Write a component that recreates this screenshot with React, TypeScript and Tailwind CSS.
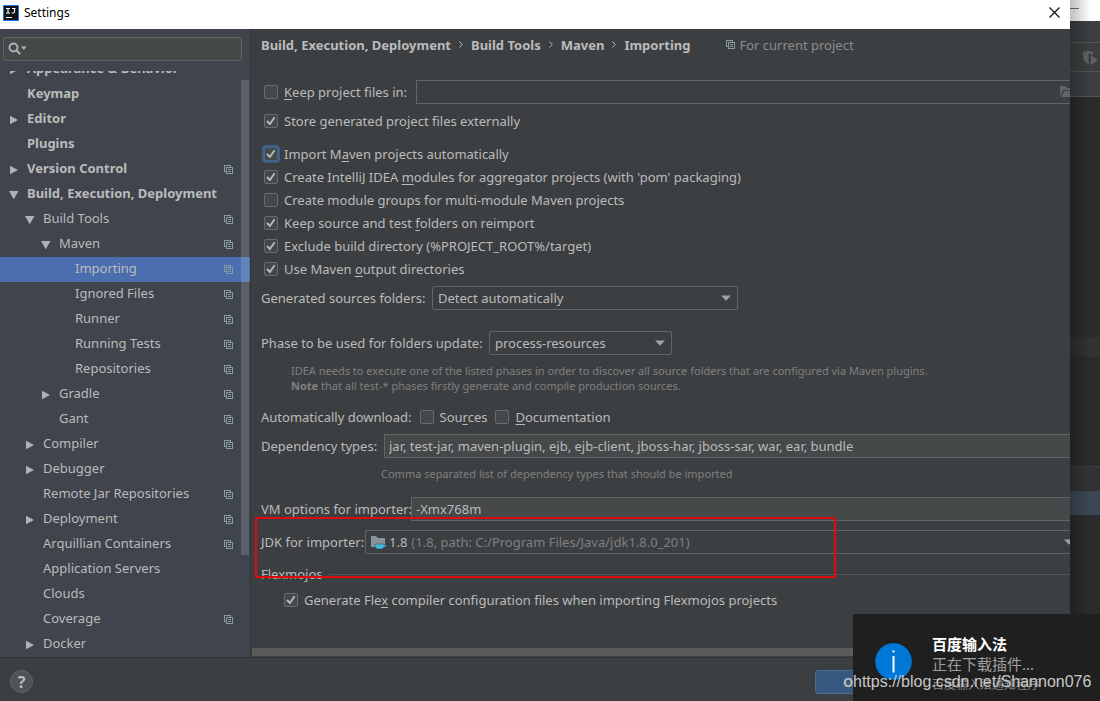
import type { ReactNode } from "react";

type TreeItem = {
  label: string;
  level: 0 | 1 | 2 | 3;
  arrow?: "open" | "closed";
  copy?: boolean;
  selected?: boolean;
};

const tree: TreeItem[] = [
  { label: "Appearance & Behavior", level: 0, arrow: "closed" },
  { label: "Keymap", level: 0 },
  { label: "Editor", level: 0, arrow: "closed" },
  { label: "Plugins", level: 0 },
  { label: "Version Control", level: 0, arrow: "closed", copy: true },
  { label: "Build, Execution, Deployment", level: 0, arrow: "open" },
  { label: "Build Tools", level: 1, arrow: "open", copy: true },
  { label: "Maven", level: 2, arrow: "open", copy: true },
  { label: "Importing", level: 3, copy: true, selected: true },
  { label: "Ignored Files", level: 3, copy: true },
  { label: "Runner", level: 3, copy: true },
  { label: "Running Tests", level: 3, copy: true },
  { label: "Repositories", level: 3, copy: true },
  { label: "Gradle", level: 2, arrow: "closed", copy: true },
  { label: "Gant", level: 2, copy: true },
  { label: "Compiler", level: 1, arrow: "closed", copy: true },
  { label: "Debugger", level: 1, arrow: "closed" },
  { label: "Remote Jar Repositories", level: 1, copy: true },
  { label: "Deployment", level: 1, arrow: "closed", copy: true },
  { label: "Arquillian Containers", level: 1, copy: true },
  { label: "Application Servers", level: 1 },
  { label: "Clouds", level: 1 },
  { label: "Coverage", level: 1, copy: true },
  { label: "Docker", level: 1, arrow: "closed" },
];

const indent = ["pl-2", "pl-6", "pl-10", "pl-14"];

function CopyIcon() {
  return (
    <svg width="9" height="9" viewBox="0 0 9 9" className="shrink-0" shapeRendering="crispEdges" fill="none" stroke="#8a9aa3" aria-hidden="true">
      <path d="M2 6.5H.5V.5H6.5V2M2.5 2.5H8.5V8.5H2.5ZM4 4.5H7M4 6.5H7" />
    </svg>
  );
}

function TreeArrow({ state }: { state?: "open" | "closed" }) {
  return (
    <svg width="10" height="10" viewBox="0 0 10 10" className="mr-2 ml-px shrink-0" fill="#afb1b3" aria-hidden="true">
      {state === "closed" && <path d="M1 0.7 9 5 1 9.3Z" />}
      {state === "open" && <path d="M0 1H9.5L4.75 9.3Z" />}
    </svg>
  );
}

function DownArrow({ className }: { className: string }) {
  return (
    <svg width="10" height="6" viewBox="0 0 10 6" className={className} fill="#9fa3a5" aria-hidden="true">
      <path d="M0 .5H10L5 5.7Z" />
    </svg>
  );
}

function Check({
  children,
  checked = false,
  focused = false,
}: {
  children: ReactNode;
  checked?: boolean;
  focused?: boolean;
}) {
  return (
    <label className="flex h-[23px] shrink-0 items-center gap-1.5 whitespace-nowrap">
      <span className="grid size-3.5 shrink-0 place-items-center">
        <input
          type="checkbox"
          defaultChecked={checked}
          className={`peer col-start-1 row-start-1 size-3.5 appearance-none rounded-[2px] border bg-[#43494a] ${
            focused ? "border-[#43698e] ring-2 ring-[#3d6185]" : "border-[#6b6b6b]"
          }`}
        />
        <svg
          width="10"
          height="10"
          viewBox="0 0 10 10"
          className="pointer-events-none invisible col-start-1 row-start-1 peer-checked:visible"
          fill="none"
          stroke="#b5b8ba"
          strokeWidth="2"
          aria-hidden="true"
        >
          <path d="M1 5 3.9 8 8.6 1.2" />
        </svg>
      </span>
      <span>{children}</span>
    </label>
  );
}

function M({ children }: { children: ReactNode }) {
  return <span className="underline underline-offset-2">{children}</span>;
}

function Crumb({ children, last = false }: { children: ReactNode; last?: boolean }) {
  return (
    <li className="flex items-center">
      <span className="font-bold">{children}</span>
      {!last && (
        <svg width="4" height="7" viewBox="0 0 4 7" className="mx-2" fill="none" stroke="#bbbbbb" aria-hidden="true">
          <path d="M.5.5 3.2 3.5.5 6.5" />
        </svg>
      )}
    </li>
  );
}

function Sidebar() {
  return (
    <aside className="relative flex w-[251px] shrink-0 flex-col border-r border-[#333638] bg-[#40444d]">
      <div className="mt-2 mr-2 ml-[3px] flex h-6 shrink-0 items-center rounded-[3px] border border-[#646464] bg-[#45494a] pl-1">
        <svg width="20" height="14" viewBox="0 0 20 14" className="shrink-0" fill="none" stroke="#afb1b3" strokeWidth="2" aria-hidden="true">
          <circle cx="5.5" cy="5.5" r="4" />
          <path d="M8.5 8.5 12.3 12.3" />
          <path d="M13 4.5H18.6L15.8 8Z" fill="#afb1b3" stroke="none" />
        </svg>
        <input type="search" aria-label="Search settings" className="w-full min-w-0 bg-transparent outline-none" />
      </div>
      <nav aria-label="Settings categories" className="mt-2.5 min-h-0 flex-1 overflow-hidden">
        <ul className="-mt-3.5">
          {tree.map((item) => (
            <li key={item.label}>
              <button
                type="button"
                className={`flex h-[25px] w-full items-center pr-[17px] text-left whitespace-nowrap ${indent[item.level]} ${
                  item.level === 0 ? "font-bold" : ""
                } ${item.selected ? "bg-[#4b6eaf]" : ""}`}
              >
                <TreeArrow state={item.arrow} />
                <span className="flex-1 pb-1">{item.label}</span>
                {item.copy && <CopyIcon />}
              </button>
            </li>
          ))}
        </ul>
      </nav>
      <div className="absolute top-[51px] right-px h-[475px] w-2 bg-white/15" />
    </aside>
  );
}

function Content() {
  return (
    <main className="flex min-w-0 flex-1 flex-col overflow-hidden pl-2.5 whitespace-nowrap">
      <div className="flex h-[31px] items-center gap-9">
        <ol className="flex">
          <Crumb>Build, Execution, Deployment</Crumb>
          <Crumb>Build Tools</Crumb>
          <Crumb>Maven</Crumb>
          <Crumb last>Importing</Crumb>
        </ol>
        <span className="flex items-center gap-1 text-[#8c8c8c]">
          <CopyIcon />
          For current project
        </span>
      </div>

      <div className="mt-5 flex h-6 items-center pl-[3px]">
        <Check>
          <M>K</M>eep project files in:
        </Check>
        <div className="ml-[9px] flex h-6 min-w-0 flex-1 items-center overflow-hidden border border-r-0 border-[#646464]">
          <input type="text" aria-label="Project files directory" className="min-w-0 flex-1 bg-transparent px-1 outline-none" />
          <svg width="10" height="12" viewBox="0 0 10 12" className="shrink-0" fill="#5f6669" aria-hidden="true">
            <path d="M0 0H5L7 2H10V4H3L0 10ZM4 5H10V11H1Z" />
          </svg>
        </div>
      </div>
      <div className="mt-[5px] pl-[3px]">
        <Check checked>Store generated project files externally</Check>
      </div>
      <div className="mt-2.5 flex flex-col items-start pl-[3px]">
        <Check checked focused>
          Import M<M>a</M>ven projects automatically
        </Check>
        <Check checked>
          Create IntelliJ IDEA <M>m</M>odules for aggregator projects (with 'pom' packaging)
        </Check>
        <Check>
          Create module <M>g</M>roups for multi-module Maven projects
        </Check>
        <Check checked>
          Keep source and test <M>f</M>olders on reimport
        </Check>
        <Check checked>Exclude build directory (%PROJECT_ROOT%/target)</Check>
        <Check checked>
          Use Maven <M>o</M>utput directories
        </Check>
      </div>

      <div className="mt-1.5 flex h-6 items-center">
        <label htmlFor="sources" className="w-[171px]">
          Generated sources folders:
        </label>
        <div className="relative flex items-center">
          <select id="sources" className="h-6 w-[306px] appearance-none rounded-[2px] border border-[#646464] bg-[#3c3f41] px-[5px]">
            <option>Detect automatically</option>
          </select>
          <DownArrow className="pointer-events-none absolute right-[7px]" />
        </div>
      </div>
      <div className="mt-[21px] flex h-6 items-center">
        <label htmlFor="phase" className="w-[228px]">
          Phase to be used for folders update:
        </label>
        <div className="relative flex items-center">
          <select id="phase" className="h-6 w-[183px] appearance-none rounded-[2px] border border-[#646464] bg-[#3c3f41] px-[5px]">
            <option>process-resources</option>
          </select>
          <DownArrow className="pointer-events-none absolute right-[7px]" />
        </div>
      </div>
      <p className="mt-2 pl-[30px] text-[11px] leading-[15px] text-[#808080]">
        IDEA needs to execute one of the listed phases in order to discover all source folders that are configured via Maven plugins.
        <br />
        <b>Note</b> that all test-* phases firstly generate and compile production sources.
      </p>

      <div className="mt-3 flex h-[23px] items-center gap-2">
        <span>Automatically download:</span>
        <Check>
          Sou<M>r</M>ces
        </Check>
        <Check>
          <M>D</M>ocumentation
        </Check>
      </div>
      <div className="mt-1.5 flex h-6 items-center">
        <label htmlFor="types" className="w-[123px]">
          Dependency types:
        </label>
        <input
          id="types"
          type="text"
          defaultValue="jar, test-jar, maven-plugin, ejb, ejb-client, jboss-har, jboss-sar, war, ear, bundle"
          className="h-6 min-w-0 flex-1 border border-r-0 border-[#646464] bg-[#45494a] px-1 outline-none"
        />
      </div>
      <p className="mt-2 pl-[120px] text-[11px] leading-[15px] text-[#808080]">
        Comma separated list of dependency types that should be imported
      </p>
      <div className="mt-4 flex h-6 items-center">
        <label htmlFor="vm" className="w-[150px]">
          VM options for importer:
        </label>
        <input
          id="vm"
          type="text"
          defaultValue="-Xmx768m"
          className="h-6 min-w-0 flex-1 border border-r-0 border-[#646464] bg-[#45494a] px-1 outline-none"
        />
      </div>

      <div className="relative mt-[9px] flex h-6 items-center">
        <label htmlFor="jdk" className="w-[104px]">
          JDK for importer:
        </label>
        <div className="relative flex h-6 min-w-0 flex-1 items-center overflow-hidden rounded-l-[2px] border border-r-0 border-[#646464] pl-[5px]">
          <svg width="16" height="15" viewBox="0 0 16 15" className="shrink-0" aria-hidden="true">
            <path d="M0 1H5L7 3H14V12H0Z" fill="#87939a" />
            <path d="M4 9H13V10H15.5V12H13L11 14H6L4 11.5Z" fill="#40b6e0" stroke="#3c3f41" strokeWidth=".5" />
          </svg>
          <span className="ml-0.5">1.8</span>
          <span className="ml-1 flex-1 text-[#808080]">(1.8, path: C:/Program Files/Java/jdk1.8.0_201)</span>
          <DownArrow className="-mr-1 shrink-0" />
          <select id="jdk" className="absolute inset-0 w-full opacity-0">
            <option>1.8</option>
          </select>
        </div>
        <div className="pointer-events-none absolute -top-[13px] -left-1.5 h-[61px] w-[581px] rounded-[2px] border-2 border-[#dd0c0f] shadow-[0_0_1px_#c01417]" />
      </div>

      <fieldset className="mt-2.5">
        <div className="flex h-5 items-center gap-1.5">
          <span>Flexmojos</span>
          <span className="h-px flex-1 bg-[#555555]" />
        </div>
        <div className="mt-1 pl-[23px]">
          <Check checked>
            Generate Fle<M>x</M> compiler configuration files when importing Flexmojos projects
          </Check>
        </div>
      </fieldset>
      <div className="mt-auto mb-px -ml-2.5 pl-px">
        <div className="h-2 bg-[#5a5b5c]" />
      </div>
    </main>
  );
}

function EditorStrip() {
  return (
    <div className="relative flex w-[30px] shrink-0 flex-col overflow-hidden bg-[#2b2b2b]" aria-hidden="true">
      <div className="h-[21px] shrink-0 bg-white pt-2">
        <div className="h-px w-[9px] bg-[#777777]" />
      </div>
      <div className="h-[22px] shrink-0 border-b border-[#555555] bg-[#3c3f41]" />
      <div className="h-[29px] shrink-0 border-b border-[#555555] bg-[#3c3f41] pt-2 pl-[13px]">
        <svg width="15" height="14" viewBox="0 0 15 14" fill="#606264">
          <path d="M0 1 5 0 10 1V4H8.5V2.5H5.5V10L7 11.5 5.5 13Q0 10 0 6ZM8 4.5 15 9.3 8 14Z" />
        </svg>
      </div>
      <div className="h-[25px] shrink-0 border-b border-[#555555] bg-[#3c3f41]" />
      <div className="mt-60 h-5 shrink-0 bg-[#323232]" />
      <div className="mt-[109px] h-[25px] shrink-0 border-t border-[#3c3e3f] bg-[#313335]" />
      <div className="h-6 shrink-0 bg-[#3d4857]" />
      <div className="absolute inset-0 bg-linear-to-r from-black/25 to-transparent to-70%" />
    </div>
  );
}

function Toast() {
  return (
    <div role="status" className="absolute right-0 bottom-0 flex h-[87px] w-[247px] bg-[#1f1f1f] pt-5 pl-[22px] whitespace-nowrap">
      <svg width="37" height="37" viewBox="0 0 37 37" className="mt-[9px] shrink-0" aria-hidden="true">
        <circle cx="18.5" cy="18.5" r="18.3" fill="#0078d7" />
        <path d="M17.5 7.5H19.5V9.5H17.5ZM17.5 13H19.5V29.5H17.5Z" fill="#fff" />
      </svg>
      <div className="ml-5">
        <p className="text-[15px] leading-5 font-bold text-white">百度输入法</p>
        <p className="text-[15px] leading-5 text-[#a0a0a0]">正在下载插件...</p>
        <p className="mt-px text-xs leading-5 text-[#858585]">百度输入法通知程序</p>
      </div>
      <span className="absolute top-[58px] left-0 font-['Liberation_Sans',sans-serif] text-base leading-5 text-[#c8c8c8]">
        https://blog.csdn.net/Shannon076
      </span>
    </div>
  );
}

export default function App() {
  return (
    <div className="relative flex h-screen overflow-hidden bg-[#3c3f41] font-['Noto_Sans','Noto_Sans_CJK_SC',sans-serif] text-[13px] leading-5 text-[#bbbbbb]">
      <div className="flex min-w-0 flex-1 flex-col">
        <header className="flex h-[29px] shrink-0 items-center bg-white pr-2.5 pb-1 pl-[3px] text-xs text-black">
          <svg width="16" height="16" viewBox="0 0 16 16" className="mr-[5px]" aria-hidden="true">
            <rect width="16" height="16" fill="#167ce8" />
            <rect x="1" y="1" width="14" height="14" fill="#111318" />
            <path d="M3 3.5H7M5 3.5V8M3 8H7M9 3.5H12.5M11.5 3.5V6.8Q11.5 8 10.3 8H8.8M3 12.5H9" fill="none" stroke="#fff" strokeWidth="1.1" />
          </svg>
          <h1 className="flex-1">Settings</h1>
          <button type="button" aria-label="Close">
            <svg width="11" height="11" viewBox="0 0 11 11" fill="none" stroke="#111" strokeWidth="1.2">
              <path d="M.5.5 10.5 10.5M10.5.5.5 10.5" />
            </svg>
          </button>
        </header>
        <div className="flex min-h-0 flex-1">
          <Sidebar />
          <Content />
        </div>
        <footer className="flex h-11 shrink-0 items-center justify-between border-t border-[#323232] pt-1 pr-[180px] pl-2.5">
          <button
            type="button"
            aria-label="Help"
            className="size-[23px] rounded-full border border-[#626567] bg-[#4f5355] text-base leading-5 font-bold"
          >
            ?
          </button>
          <button type="button" className="h-6 w-[75px] rounded-[3px] border border-[#4c708c] bg-[#365880] font-bold">
            OK
          </button>
        </footer>
      </div>
      <EditorStrip />
      <Toast />
    </div>
  );
}
